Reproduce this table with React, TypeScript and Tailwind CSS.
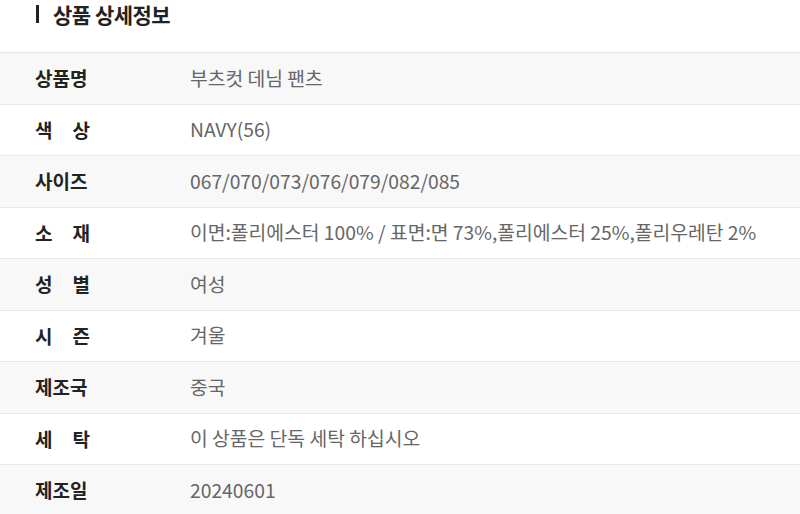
import React from "react";

const rows: { label: string[]; value: string }[] = [
  { label: ["상품명"], value: "부츠컷 데님 팬츠" },
  { label: ["색", "상"], value: "NAVY(56)" },
  { label: ["사이즈"], value: "067/070/073/076/079/082/085" },
  { label: ["소", "재"], value: "이면:폴리에스터 100% / 표면:면 73%,폴리에스터 25%,폴리우레탄 2%" },
  { label: ["성", "별"], value: "여성" },
  { label: ["시", "즌"], value: "겨울" },
  { label: ["제조국"], value: "중국" },
  { label: ["세", "탁"], value: "이 상품은 단독 세탁 하십시오" },
  { label: ["제조일"], value: "20240601" },
];

export default function App() {
  return (
    <div
      className="w-[800px] h-[514px] overflow-hidden bg-white"
      style={{ fontFamily: '"Noto Sans CJK KR", "Noto Sans", sans-serif' }}
    >
      <div className="h-[52px] flex items-start pt-[3px] pl-[36px]">
        <div className="flex items-center h-[22px] gap-[14px]">
          <span className="w-[3px] h-[18px] bg-[#222]" />
          <span className="text-[21px] font-bold text-[#222] leading-none tracking-[-0.5px]">상품 상세정보</span>
        </div>
      </div>
      <div className="border-t border-[#e6e6e6]">
        {rows.map((r, i) => (
          <div
            key={i}
            className={`flex items-center h-[51.5px] border-b border-[#e8e8e8] ${
              i % 2 === 0 ? "bg-[#f8f8f8]" : "bg-white"
            }`}
          >
            <div className="w-[190px] pl-[35px] shrink-0">
              {r.label.length === 1 ? (
                <span className="text-[19px] font-bold text-[#222]">{r.label[0]}</span>
              ) : (
                <span className="flex justify-between w-[55px] text-[19px] font-bold text-[#222]">
                  <span>{r.label[0]}</span>
                  <span>{r.label[1]}</span>
                </span>
              )}
            </div>
            <div className="text-[19.3px] text-[#666] whitespace-nowrap">{r.value}</div>
          </div>
        ))}
      </div>
    </div>
  );
}
